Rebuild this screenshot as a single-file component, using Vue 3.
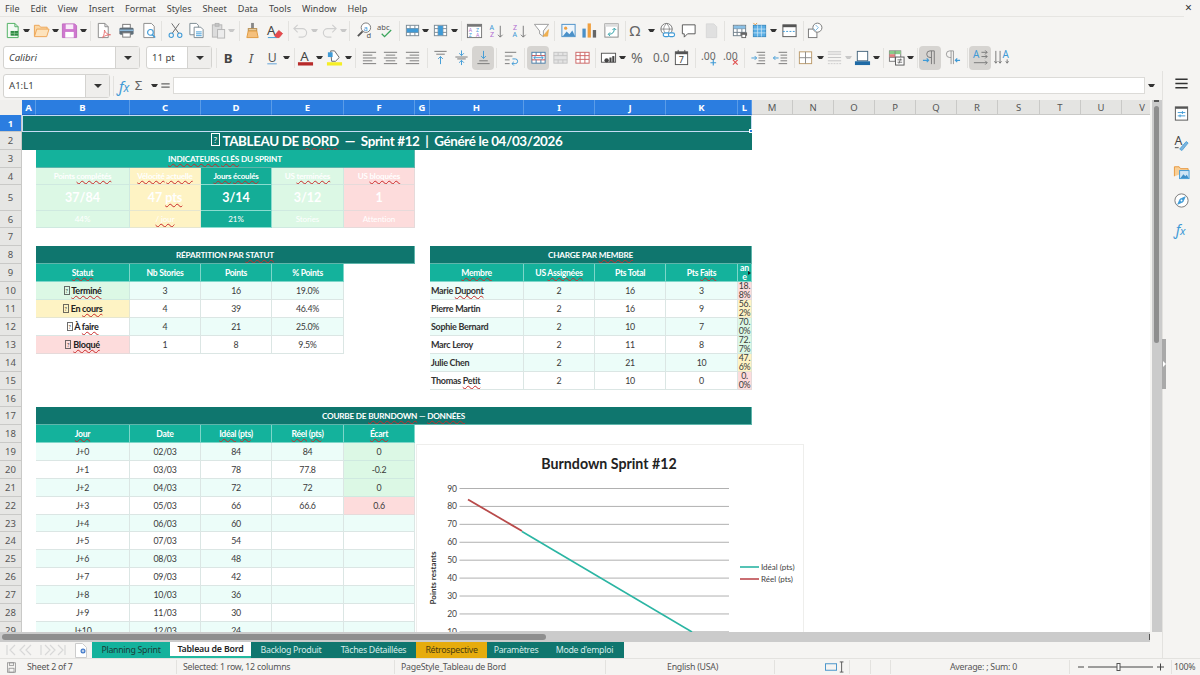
<script setup>
const DK = '#555'
const BL = '#3f9ad6'
const S = (d, c = DK, w = 1, f = 'none') => `<path d="${d}" stroke="${c}" stroke-width="${w}" fill="${f}"/>`
const R = (x, y, w, h, f, s = 'none') => `<rect x="${x}" y="${y}" width="${w}" height="${h}" fill="${f}" stroke="${s}"/>`
const O = (x, y, r, f, s = 'none', w = 1) => `<circle cx="${x}" cy="${y}" r="${r}" fill="${f}" stroke="${s}" stroke-width="${w}"/>`
const T = (x, y, t, z, c = DK, ex = '') => `<text x="${x}" y="${y}" font-size="${z}" fill="${c}" font-family="Noto Sans, sans-serif" ${ex}>${t}</text>`
const GRID = (c = '#8a8a8a') => R(2.5, 3.5, 13, 11, '#fff', c) + S('M2.5 7h13M2.5 11h13M6.5 3.5v11M11.5 3.5v11', c)
const arrowD = (x, y1, y2, c = BL) => S(`M${x} ${y1}V${y2}M${x - 2.5} ${y2 - 2.5}L${x} ${y2}l2.5 -2.5`, c)
const arrowU = (x, y1, y2, c = BL) => S(`M${x} ${y1}V${y2}M${x - 2.5} ${y2 + 2.5}L${x} ${y2}l2.5 2.5`, c)

const icons = {
  new: S('M3.5 1.5h8l3.5 3.5v11.5H3.5z', '#4caf60', 1, '#f3faf4') + S('M11.5 1.5V5H15', '#4caf60') + R(7, 9.5, 8, 5, '#2e8b44') + S('M7 12h8M11 9.5v5', '#a5d6a7', .6),
  open: S('M1.5 15V3.5h5l1.5 2h7V8', '#eda555', 1, '#fbd8a6') + S('M1.5 15.5l2.5-8h13l-2.5 8z', '#eda555', 1, '#fde3bd'),
  save: S('M1.5 2h13l2 2v12.5h-15z', '#c06ac0', 1, '#cf78cf') + R(5, 2.5, 8, 5, '#f9ecf9') + R(4.5, 10.5, 9, 6, '#fff'),
  pdf: S('M3.5 1.5h7l3.5 3.5v11.5H3.5z', '#888', 1, '#fff') + S('M10.5 1.5V5H14', '#888') + S('M8 16.5c2-3 2-6 2-8 1 3 3 5 6.5 5-3.5 0-6.5 1-8.5 3z', '#e87070'),
  print: R(5, 2.5, 8, 4, '#fff', '#777') + `<rect x="1.5" y="6" width="15" height="7.5" rx="1.5" fill="#5f6d77"/>` + R(1.5, 8, 15, 1.6, '#8cb8d8') + R(5, 11.5, 8, 4.5, '#fff', '#777'),
  preview: S('M3 1.5h8l3 3v12H3z', '#888', 1, '#fff') + O(10, 11, 3, '#fff', BL, 1.2) + S('M12 13.5l3 3', BL, 1.5),
  cut: S('M5 1.5l7.5 10.5M13 1.5L5.5 12', '#666', 1) + O(4.5, 14, 2.3, 'none', BL, 1.1) + O(13.5, 14, 2.3, 'none', BL, 1.1),
  copy: S('M2 1.5h7l2 2v10H2z', '#7a8890', 1, '#fff') + S('M6.5 5.5h7l2.5 2.5v8.5H6.5z', '#7a8890', 1, '#fff') + S('M8.500 10.5h6M8.5 12.5h6M8.5 14.5h6', BL),
  paste: R(2.5, 3, 10, 13, '#dcdcdc', '#b5b5b5') + R(5.5, 1.5, 4, 3, '#c4c4c4', '#b5b5b5') + R(8, 8, 7.5, 9, '#ececec', '#b5b5b5'),
  clone: R(7.5, 1, 3, 6, '#888') + R(4.5, 7, 9, 2.5, '#e9d2a8', '#b58a4a') + S('M4.5 9.500h9l1.500 7H3z', '#e09a3f', 1, '#f5c07d'),
  clear: T(1, 14, 'A', 14, '#444') + S('M9 14.5l4.5-5.5 4 3.2-3.6 4.3h-3z', '#d43c3c', .8, '#e8494f') + S('M2 16.5h9', BL),
  undo: S('M6 3L2 7l4 4M2 7h9a4.4 4.4 0 0 1 0 9H7', '#cfcfcf', 1.2),
  redo: S('M12 3l4 4-4 4M16 7H7a4.4 4.4 0 0 0 0 9h4', '#cfcfcf', 1.2),
  find: O(10.5, 6, 5, '#fff', '#777') + T(8, 9, 'a', 8, BL) + S('M7 10l-5 5', '#555', 2) + T(11, 17, 'd', 8, '#555'),
  spell: T(0, 8, 'abc', 8, '#555') + S('M5 12.5l3 3 7-7', '#3ba55c', 1.4),
  row: GRID('#7a8a96') + R(3, 7, 12, 4, BL),
  col: GRID('#7a8a96') + R(6.5, 4, 5, 10, BL),
  sort: R(1.5, 2.5, 15, 14, '#fff', '#777') + R(1.5, 2.5, 15, 2.5, '#777') + T(3, 10.5, 'A', 5.5, '#b06ad0') + T(10.5, 10.5, 'Z', 5.5, BL) + T(3, 16, 'Z', 5.5, BL) + T(10.5, 16, 'A', 5.5, '#b06ad0'),
  asc: T(1.5, 8, 'A', 7.5, BL) + T(2, 16, 'Z', 7.5, '#b06ad0') + arrowD(13, 4, 16, '#777'),
  desc: T(2, 8, 'Z', 7.5, '#b06ad0') + T(1.5, 16, 'A', 7.5, BL) + arrowD(13, 4, 16, '#777'),
  filter: S('M1.5 2.5h15l-5.5 7v6l-4-3v-3z', '#999', 1, '#fff') + S('M10.5 15l6-7-1 7z', '#e8a33d', .6, '#f0b050'),
  image: R(2, 2.5, 14, 13, '#eef5fb', '#4a90c8') + O(6, 6.5, 1.7, '#f0a040') + S('M3 15l4-5 3 3 3-4 3 6z', 'none', 1, '#4a90c8'),
  chart: R(1.5, 7, 3.5, 9.5, '#4a90c8') + R(7, 1.5, 3.5, 15, '#f0a040') + R(12.5, 8.5, 3.5, 8, '#666'),
  pivot: R(2, 2, 14, 14, '#fff', '#888') + R(2, 2, 14, 3, '#ddd') + S('M6 13c4 0 6-2 6-6M10 8.5l2-2 2 2M7.5 11L5.5 13l2 2', '#2b9ea6'),
  omega: T(0.5, 14.5, 'Ω', 16, '#666'),
  link: O(8, 7.5, 6, '#fff', '#777') + S('M2 7.5h12M8 1.5c-4 4-4 8 0 12M8 1.5c4 4 4 8 0 12', '#777', .8) + `<rect x="4.5" y="11.5" width="6.5" height="4" rx="2" fill="#fff" stroke="${BL}" stroke-width="1.2"/><rect x="10" y="11.5" width="6.5" height="4" rx="2" fill="#fff" stroke="${BL}" stroke-width="1.2"/>`,
  comment: S('M2.5 3h13.5v9.5H8L4.5 16v-3.5h-2z', '#555', 1, '#fff'),
  hf: S('M3.5 2h8l3 3v11.5h-11z', '#d8d8d8', 1, '#e0e0e0'),
  area: GRID('#6e7e8a') + R(3, 4, 12, 3, '#8ac0e6') + R(10, 11, 7, 3.5, '#666') + R(11.5, 13, 4, 3.5, '#fff', '#666'),
  freeze: R(2.5, 3.5, 13, 12, '#5aaee5', '#3c8bc0') + S('M2.5 7.5h13M2.5 11.5h13M7 3.5v12M11 3.5v12', '#cfe7f6', .8) + S('M2.5 1l2 2 2-2', '#e8963c'),
  split: R(2, 3, 14, 12.5, '#fff', '#555') + R(2, 3, 14, 2.5, '#555') + S('M2 10h14', BL, 1, 'none').replace('/>', ' stroke-dasharray="2 1.5"/>'),
  shapes: R(1.5, 7.5, 9, 9, '#fff', '#777') + O(11, 6, 4.8, '#fff', '#777') + S('M9 3l3 3-3 3-2-2', '#3f9ad6', .7),
  bold: T(4, 14.5, 'B', 14, '#444', 'font-weight="700"'),
  ital: T(6, 14.5, 'I', 14, '#555', 'font-style="italic"'),
  under: T(4, 13.5, 'U', 13, '#555') + R(3.5, 15, 10, 1.3, '#7fb4de'),
  fcolor: T(3.5, 13, 'A', 14, '#444') + R(1, 14, 16, 3.5, '#b82a2a'),
  hcolor: S('M5 2h4l5 7-4 4H6z', '#666', 1, '#fff') + R(2, 3.5, 5, 5, BL) + R(1, 14, 16, 3.5, '#f5ee25'),
  al: S('M2 3.5h14M2 6.5h10M2 9.5h14M2 12.5h10M2 15.5h14', '#777'),
  ac: S('M2 3.5h14M4 6.5h10M2 9.5h14M4 12.5h10M2 15.5h14', '#777'),
  ar: S('M2 3.5h14M6 6.5h10M2 9.5h14M6 12.5h10M2 15.5h14', '#777'),
  vt: S('M2.5 2.5h13M4.5 5.5h9', '#777') + arrowU(9, 16, 8),
  vm: S('M2.5 8.5h13M4.5 10.5h9', '#777') + arrowD(9, 1.5, 7) + arrowU(9, 17, 12),
  vb: S('M4.5 12.5h9M2.5 15.5h13', '#777') + arrowD(9, 2, 10),
  wrap: S('M2 3.5h12M2 7.5h8M2 11.5h5M2 15.5h5', '#777') + S('M10 10.5h3a2.2 2.2 0 0 1 0 5H9.5M11.5 13.5l-2 2 2 2', BL),
  merge: R(2, 3.5, 14, 11.5, '#fff', '#4a7ea8') + S('M2 7h14M2 11.5h14', '#c44') + S('M6.5 3.5v3.5M11.5 3.5V7M6.5 11.5V15M11.5 11.5V15', '#4a7ea8') + S('M4 9.2h10M6 7.5l-2 1.7 2 1.7M12 7.5l2 1.7-2 1.7', BL),
  mergeC: R(2, 3.5, 14, 11.5, '#e4e4e4', '#c4c4c4') + S('M2 7h14M2 11.5h14M6.5 3.5V7M11.5 3.5V7M6.5 11.5V15M11.5 11.5V15', '#c4c4c4'),
  unmerge: R(2, 3.5, 14, 11.5, '#fff', '#c66') + S('M2 7h14M2 11h14M6.5 3.5V15M11.5 3.5V15', '#c66'),
  curr: R(1.5, 4.5, 15, 9.5, '#fff', '#555') + O(7, 12, 2.3, '#444') + R(10, 9, 2.2, 5, '#444') + R(13, 7.5, 2.2, 6.5, '#444'),
  pct: T(1, 14.5, '%', 15, '#666'),
  num: T(1, 14, '0.0', 12.5, '#666'),
  date: R(2.5, 3, 13, 13.5, '#fff', '#555') + R(2.5, 3, 13, 2.5, '#555') + S('M5.5 1v3M12.5 1v3', '#555') + T(6, 14.5, '7', 9.5, '#444'),
  dplus: T(0, 12, '.00', 11, '#666') + S('M13 11.5v6M10 14.5h6', BL, 1.2),
  dminus: T(0, 12, '.00', 11, '#666') + S('M10.5 11.5l5 5M15.5 11.5l-5 5', '#e05050', 1.2),
  iin: S('M7 3.5h9M9 6.5h7M9 9.5h7M9 12.5h7M7 15.5h9', '#777') + S('M1.5 9.5h5.5M5 7.5l2 2-2 2', BL),
  iout: S('M7 3.5h9M9 6.5h7M9 9.5h7M9 12.5h7M7 15.5h9', '#777') + S('M7 9.5H1.5M3.5 7.5l-2 2 2 2', BL),
  border: R(2.5, 3, 13, 12.5, '#fff', '#bb9a6a') + S('M2.5 9.2h13M9 3v12.5', '#888'),
  lstyle: S('M2 3h14M2 5.5h14M2 9h14M2 12.5h14', '#c4c4c4', 1) + S('M2 15.5h14', '#ccc', 1).replace('/>', ' stroke-dasharray="2 1"/>'),
  bcolor: R(3.5, 2.5, 11, 10, '#fff', '#45657e') + R(1, 13, 16, 4, '#1f6aa5'),
  cond: R(1.5, 2, 12, 11, '#fff', '#777') + R(1.5, 2, 12, 3.5, '#8acb8a') + R(1.5, 5.5, 6, 3.5, '#e28080') + S('M1.5 9h12M7.5 2v11', '#777', .7) + R(8, 8.5, 9, 8.5, '#fff', '#555') + S('M10 11.5h5M10 14h5M13.5 10l-2 5.5', '#555', .8),
  ltr: S('M13 2H8.5a3.5 3.5 0 0 0 0 7H10M10 2v14M13 2v14', '#777') + S('M1 12h6M5 10l2 2-2 2', BL, 1.2),
  rtl: S('M10 2H6a3 3 0 0 0 0 7h1.5M7.5 2v14M10 2v14', '#999') + S('M17 12h-5M14 10l-2 2 2 2', BL, 1.2),
  atxt: T(1, 9.5, 'A', 10.5, BL) + S('M10 3.5h6M14 1.5l2 2-2 2M10 8h6M14 6l2 2-2 2M2 14.5h14M14 12.5l2 2-2 2', '#777'),
  vtxt: S('M3 2v13M1.5 13l1.5 2 1.5-2M7.5 2v13M6 13l1.5 2 1.5-2M15 11v4M13.5 13l1.5 2 1.5-2', '#777') + T(10, 10, 'A', 10.5, BL),
  menu: S('M2.5 4.5h13M2.5 9h13M2.5 13.5h13', '#333', 1.6),
  prop: R(2.5, 2, 13, 14, '#fff', '#555') + R(2.5, 2, 13, 2, '#555') + S('M5 8h8M5 11.5h8', BL) + S('M10 6.5v3M7.5 10v3', BL),
  styl: T(1.5, 11.5, 'A', 13, '#444') + S('M7 16l7-8 2 1.5-6.5 8z', BL, .8, '#7fb4de') + S('M2 14.5h4', '#444'),
  gall: S('M1.5 14V4h5l1.5 2h8v3', '#e8963c', 1, '#f9cf96') + R(7, 8, 10, 8.5, '#cfe4f4', BL) + S('M8 16l3-4 2 2 1.5-1.5 2 3.5z', 'none', 1, '#3f8fc8'),
  nav: O(9, 9, 7, '#fff', '#777') + S('M13 5L7.5 7.5 5 13l5.5-2.5z', BL, .8, BL) + O(9, 9, 1, '#fff'),
  fx: T(1.5, 14.5, 'ƒ', 15, BL, 'font-style="italic" font-family="Liberation Serif, serif"') + T(7.5, 15, 'x', 12, BL, 'font-style="italic"'),
  docs: R(3.5, 2.5, 11, 13, 'none', '#888') + R(6, 2.5, 6, 3.5, 'none', '#888') + R(5.5, 10, 7, 5.5, 'none', '#888'),
  sigma: T(3, 14, 'Σ', 15, '#666'),
  eq: S('M4 7h10M4 11h10', '#666', 1.6)
}

const layout = (items, start) => {
  let end = start
  return items.map(([k, c, a]) => {
    const type = k === 'v' ? 'drop' : k === '|' ? 'sep' : 'btn'
    const w = type === 'drop' ? 8 : type === 'sep' ? 1 : 22
    const ml = c - w / 2 - end
    end = c + w / 2
    return { k, type, ml, a }
  })
}

const tb1 = layout([
  ['new', 12], ['v', 27], ['open', 42], ['v', 57], ['save', 71], ['v', 86], ['|', 93], ['pdf', 106], ['print', 129], ['preview', 152], ['|', 164],
  ['cut', 178], ['copy', 199], ['paste', 221], ['v', 235, 'off'], ['|', 243], ['clone', 256], ['clear', 278], ['|', 292], ['undo', 304], ['v', 319, 'off'], ['redo', 334], ['v', 349, 'off'], ['|', 355],
  ['find', 370], ['spell', 391], ['|', 405], ['row', 418], ['v', 432], ['col', 447], ['v', 462], ['|', 469], ['sort', 482], ['asc', 504], ['desc', 527], ['filter', 549], ['|', 562],
  ['image', 576], ['chart', 597], ['pivot', 619], ['|', 633], ['omega', 645], ['v', 660], ['link', 676], ['comment', 697], ['hf', 720], ['|', 733], ['area', 748], ['freeze', 768], ['v', 783], ['split', 799], ['|', 813], ['shapes', 825]
], 0)

const tb2 = layout([
  ['|', 216], ['bold', 228], ['ital', 251], ['under', 272], ['v', 287], ['|', 295], ['fcolor', 306], ['v', 321], ['hcolor', 336], ['v', 351], ['|', 358],
  ['al', 372], ['ac', 393], ['ar', 415], ['|', 430], ['vt', 443], ['vm', 464], ['vb', 486, 'on'], ['|', 499], ['wrap', 514], ['|', 527], ['merge', 541, 'on'], ['mergeC', 563], ['unmerge', 585], ['|', 598],
  ['curr', 611], ['v', 626], ['pct', 642], ['num', 664], ['date', 685], ['|', 699], ['dplus', 713], ['dminus', 735], ['|', 748], ['iin', 762], ['iout', 784], ['|', 798],
  ['border', 809], ['v', 825], ['lstyle', 839], ['v', 854, 'off'], ['bcolor', 868], ['v', 883], ['|', 890], ['cond', 903], ['v', 918], ['|', 925], ['ltr', 938, 'on'], ['rtl', 960], ['|', 975], ['atxt', 988, 'on'], ['vtxt', 1009]
], 212)

const menus = ['File', 'Edit', 'View', 'Insert', 'Format', 'Styles', 'Sheet', 'Data', 'Tools', 'Window', 'Help']
const sideIcons = ['prop', 'styl', 'gall', 'nav', 'fx']
const colNames = 'ABCDEFGHIJKLMNOPQRSTUV'.split('')
const rowNums = Array.from({ length: 29 }, (_, i) => i + 1)

const cells = []
const add = (r, col, t, cls, span = 1) => {
  const c = colNames.indexOf(col) + 2
  cells.push({ id: `${col}${r}`, area: `${r + 1} / ${c} / ${r + 2} / ${c + span}`, parts: parse(t), cls })
}
function parse (t) {
  return String(t).split(/(~[^~]+~|§)/).filter(Boolean).map(p =>
    p === '§' ? { k: 'box' } : p[0] === '~' ? { k: 'bad', t: p.slice(1, -1) } : { k: 'txt', t: p })
}

add(1, 'A', '', 'dark sel', 12)
add(2, 'A', '§ TABLEAU DE ~BORD~  —  Sprint #12  |  Généré le 04/03/2026', 'dark title', 12)
add(3, 'B', '~INDICATEURS~ ~CLÉS~ DU SPRINT', 'mid band', 5)
const kpi = [
  ['B', 'Points ~complétés~', '37/84', '44%', 'kg'],
  ['C', '~Vélocité~ ~actuelle~', '47 ~pts~', '~/ jour~', 'ky'],
  ['D', '~Jours~ ~écoulés~', '3/14', '21%', 'km'],
  ['E', 'US ~terminées~', '3/12', 'Stories', 'kg'],
  ['F', 'US ~bloquées~', '1', 'Attention', 'kr']
]
kpi.forEach(([c, a, b, d, k]) => {
  add(4, c, a, `${k} klabel`)
  add(5, c, b, `${k} kval`)
  add(6, c, d, `${k} ksub`)
})

add(8, 'B', 'RÉPARTITION PAR ~STATUT~', 'dark band', 5)
;['~Statut~', 'Nb Stories', 'Points', '% Points'].forEach((t, i) => add(9, 'BCDE'[i], t, 'mid head'))
;[
  ['§ ~Terminé~', 'sg', 3, 16, '19.0%'],
  ['§ En ~cours~', 'sy', 4, 39, '46.4%'],
  ['§ À ~faire~', 'sw', 4, 21, '25.0%'],
  ['§ ~Bloqué~', 'sr', 1, 8, '9.5%']
].forEach((row, i) => {
  const alt = i % 2 === 0 ? 'alt' : 'plain'
  add(10 + i, 'B', row[0], `${row[1]} stcell`)
  add(10 + i, 'C', row[2], alt)
  add(10 + i, 'D', row[3], alt)
  add(10 + i, 'E', row[4], alt)
})

add(8, 'H', 'CHARGE PAR ~MEMBRE~', 'dark band', 5)
;['~Membre~', 'US ~Assignées~', 'Pts Total', 'Pts ~Faits~'].forEach((t, i) => add(9, 'HIJK'[i], t, 'mid head'))
add(9, 'L', 'ane', 'mid narrow clipped')
;[
  ['Marie ~Dupont~', 2, 16, 3, '18.8%', 'sr'],
  ['Pierre Martin', 2, 16, 9, '56.2%', 'sy'],
  ['Sophie Bernard', 2, 10, 7, '70.0%', 'sg'],
  ['Marc Leroy', 2, 11, 8, '72.7%', 'sg'],
  ['Julie Chen', 2, 21, 10, '47.6%', 'sy'],
  ['Thomas ~Petit~', 2, 10, 0, '0.0%', 'sr']
].forEach((row, i) => {
  const alt = i % 2 === 0 ? 'alt' : 'plain'
  add(10 + i, 'H', row[0], `${alt} name`)
  add(10 + i, 'I', row[1], alt)
  add(10 + i, 'J', row[2], alt)
  add(10 + i, 'K', row[3], alt)
  add(10 + i, 'L', row[4], `${row[5]} narrow`)
})

add(17, 'B', 'COURBE DE ~BURNDOWN~ — ~DONNÉES~', 'dark band', 11)
;['~Jour~', 'Date', '~Idéal~ (~pts~)', '~Réel~ (~pts~)', '~Écart~'].forEach((t, i) => add(18, 'BCDEF'[i], t, 'mid head'))
const burn = [
  ['J+0', '02/03', 84, 84, 0], ['J+1', '03/03', 78, 77.8, -0.2], ['J+2', '04/03', 72, 72, 0], ['J+3', '05/03', 66, 66.6, 0.6],
  ['J+4', '06/03', 60], ['J+5', '07/03', 54], ['J+6', '08/03', 48], ['J+7', '09/03', 42], ['J+8', '10/03', 36], ['J+9', '11/03', 30], ['J+10', '12/03', 24]
]
burn.forEach((row, i) => {
  const alt = i % 2 === 0 ? 'alt' : 'plain'
  const r = 19 + i
  add(r, 'B', row[0], alt)
  add(r, 'C', row[1], alt)
  add(r, 'D', row[2], alt)
  add(r, 'E', row[3] ?? '', alt)
  const e = row[4]
  add(r, 'F', e ?? '', e === undefined ? alt : e > 0 ? 'sr' : 'sg')
})

const ticks = [90, 80, 70, 60, 50, 40, 30, 20, 10]
const yAt = v => 44.5 + (90 - v) * 1.792
const tabs = [
  { t: 'Planning Sprint', w: 78, c: 'tmid' },
  { t: 'Tableau de Bord', w: 81, c: 'tact' },
  { t: 'Backlog Produit', w: 80, c: 'tdark' },
  { t: 'Tâches Détaillées', w: 85, c: 'tdark' },
  { t: 'Rétrospective', w: 71, c: 'tgold' },
  { t: 'Paramètres', w: 58, c: 'tdark' },
  { t: "Mode d'emploi", w: 79, c: 'tdark' }
]
</script>

<template>
  <div class="app">
    <div class="menubar">
      <span v-for="m in menus" :key="m" class="menu">{{ m }}</span>
      <span class="close">×</span>
    </div>

    <div class="toolbar">
      <template v-for="(it, i) in tb1" :key="i">
        <span v-if="it.type === 'sep'" class="sep" :style="{ marginLeft: it.ml + 'px' }"></span>
        <span v-else-if="it.type === 'drop'" class="drop" :class="it.a" :style="{ marginLeft: it.ml + 'px' }"></span>
        <span v-else class="btn" :style="{ marginLeft: it.ml + 'px' }"><svg class="ic" viewBox="0 0 18 18" v-html="icons[it.k]"></svg></span>
      </template>
    </div>

    <div class="toolbar">
      <div class="combo fontname"><span class="combotext italic">Calibri</span><span class="combobtn"><i class="caret"></i></span></div>
      <div class="combo fontsize"><span class="combotext">11 pt</span><span class="combobtn"><i class="caret"></i></span></div>
      <template v-for="(it, i) in tb2" :key="i">
        <span v-if="it.type === 'sep'" class="sep" :style="{ marginLeft: it.ml + 'px' }"></span>
        <span v-else-if="it.type === 'drop'" class="drop" :class="it.a" :style="{ marginLeft: it.ml + 'px' }"></span>
        <span v-else class="btn" :class="it.a" :style="{ marginLeft: it.ml + 'px' }"><svg class="ic" viewBox="0 0 18 18" v-html="icons[it.k]"></svg></span>
      </template>
    </div>

    <div class="main">
      <div class="work">
        <div class="formula">
          <div class="combo namebox"><span class="combotext">A1:L1</span><span class="combobtn"><i class="caret"></i></span></div>
          <span class="sep fsep"></span>
          <svg class="ic fxi" viewBox="0 0 18 18" v-html="icons.fx"></svg>
          <svg class="ic sumi" viewBox="0 0 18 18" v-html="icons.sigma"></svg>
          <span class="drop sumd"></span>
          <svg class="ic eqi" viewBox="0 0 18 18" v-html="icons.eq"></svg>
          <div class="finput"></div>
          <span class="drop fdrop"></span>
        </div>

        <div class="sheetarea">
          <div class="sheet">
            <div class="grid">
              <div class="corner"></div>
              <div v-for="(c, i) in colNames" :key="c" class="colh" :class="{ on: i < 12 }">{{ c }}</div>
              <div v-for="r in rowNums" :key="r" class="rowh" :class="{ on: r === 1 }" :style="{ gridRow: r + 1 }">{{ r }}</div>
              <div v-for="c in cells" :key="c.id" class="cell" :class="c.cls" :style="{ gridArea: c.area }">
                <span class="inner"><template v-for="(p, i) in c.parts" :key="i"><span v-if="p.k === 'box'" class="tofu">?</span><span v-else-if="p.k === 'bad'" class="bad">{{ p.t }}</span><template v-else>{{ p.t }}</template></template></span>
              </div>
            </div>

            <div class="chart">
              <svg width="388" height="190" viewBox="0 0 388 190">
                <text x="193" y="25" class="ctitle" text-anchor="middle">Burndown Sprint #12</text>
                <g v-for="v in ticks" :key="v">
                  <line x1="43.5" x2="313" :y1="yAt(v)" :y2="yAt(v)" stroke="#b0b0b0" stroke-width="1" />
                  <text x="41" :y="yAt(v) + 3" class="ctick" text-anchor="end">{{ v }}</text>
                </g>
                <text class="caxis" text-anchor="middle" transform="translate(20 134) rotate(-90)">Points restants</text>
                <line x1="106" :y1="yAt(66)" x2="276" y2="188" stroke="#2bb5a3" stroke-width="1.6" />
                <polyline points="52,55.5 70,66 88,76.5 106,87" fill="none" stroke="#b84a4a" stroke-width="1.8" />
                <line x1="324" x2="343" y1="123" y2="123" stroke="#2bb5a3" stroke-width="1.6" />
                <line x1="324" x2="343" y1="135" y2="135" stroke="#bd4a4f" stroke-width="1.6" />
                <text x="345" y="126" class="clegend">Idéal (pts)</text>
                <text x="345" y="138" class="clegend">Réel (pts)</text>
              </svg>
            </div>
          </div>
          <div class="vscroll"><i class="vcap"></i><i class="vthumb"></i></div>
        </div>

        <div class="hscroll"><i class="hthumb"></i><i class="hmark"></i></div>

        <div class="tabbar">
          <div class="tabnav">
            <svg width="62" height="16" viewBox="0 0 62 16">
              <path d="M2 3v10M10 3L5 8l5 5M20 3l-5 5 5 5M26 3l-5 5 5 5M36 3v10M40 3l5 5-5 5M45 3l5 5-5 5M53 3l5 5-5 5M60 3v10" fill="none" stroke="#d8d8d8" stroke-width="1.2" />
            </svg>
          </div>
          <div class="newtab">
            <svg width="12" height="15" viewBox="0 0 12 15">
              <path d="M.5 .5h7l4 4v10H.5z" fill="#fff" stroke="#ccc" />
              <circle cx="8" cy="8" r="2.5" fill="#3f78c9" />
              <path d="M6.7 8h2.6M8 6.7v2.6" stroke="#fff" stroke-width=".8" />
            </svg>
          </div>
          <div v-for="t in tabs" :key="t.t" class="tab" :class="t.c" :style="{ width: t.w + 'px' }">{{ t.t }}</div>
        </div>
      </div>

      <div class="sidebar">
        <svg class="ic sidemenu" viewBox="0 0 18 18" v-html="icons.menu"></svg>
        <svg v-for="s in sideIcons" :key="s" class="ic" viewBox="0 0 18 18" v-html="icons[s]"></svg>
        <div class="sash"></div>
      </div>
    </div>

    <div class="statusbar">
      <svg class="ic sdoc" viewBox="0 0 18 18" v-html="icons.docs"></svg>
      <span class="st s1">Sheet 2 of 7</span>
      <span class="st s2">Selected: 1 row, 12 columns</span>
      <span class="st s3">PageStyle_Tableau de Bord</span>
      <span class="st s4">English (USA)</span>
      <span class="st s5">
        <svg width="26" height="14" viewBox="0 0 26 14">
          <rect x=".5" y="3.5" width="12" height="7" fill="none" stroke="#3f8fc8" />
          <path d="M16 1.5h4M18 1.5v11M16 12.5h4" stroke="#555" fill="none" />
        </svg>
      </span>
      <span class="st s6"></span>
      <span class="st s7"></span>
      <span class="st s8">Average: ; Sum: 0</span>
      <span class="st s9">
        <svg width="100" height="14" viewBox="0 0 100 14">
          <path d="M8 7h6M18 7h65M87 7h7M90.500 3.500v7" stroke="#444" fill="none" />
          <rect x="47" y="3.500" width="3" height="7" fill="#fff" stroke="#555" />
        </svg>
      </span>
      <span class="st s10">100%</span>
    </div>
  </div>
</template>

<style scoped>
.app {
  width: 1200px;
  height: 675px;
  overflow: hidden;
  display: flex;
  flex-direction: column;
  background: #f5f4f2;
  font-family: "Noto Sans", sans-serif;
  color: #444;
}
.menubar {
  height: 17px;
  flex: none;
  display: flex;
  align-items: center;
  gap: 11px;
  padding-left: 5px;
  font-size: 9.1px;
  position: relative;
  box-sizing: border-box;
  border-bottom: 1px solid #e6e5e2;
  margin-right: 16px;
}
.close { position: absolute; left: 1185px; top: 1px; font-size: 12px; line-height: 14px; color: #333; }
.toolbar {
  height: 27px;
  flex: none;
  display: flex;
  align-items: center;
}
.btn {
  width: 22px;
  height: 24px;
  flex: none;
  display: flex;
  align-items: center;
  justify-content: center;
  border-radius: 4px;
}
.btn.on { background: #d6d4d1; }
.ic { width: 17px; height: 17px; flex: none; display: block; overflow: visible; }
.drop {
  flex: none;
  box-sizing: content-box;
  border-left: 2.5px solid transparent;
  border-right: 2.5px solid transparent;
  border-top: 3px solid #333;
  width: 3px;
  height: 0;
}
.drop.off { border-top-color: #c8c8c8; }
.sep { width: 1px; height: 20px; flex: none; background: #e3e2df; }
.combo {
  display: flex;
  box-sizing: border-box;
  border: 1px solid #d4d3d0;
  border-radius: 3px;
  background: #fff;
  flex: none;
  height: 23px;
  font-size: 9.6px;
  color: #444;
}
.combotext { flex: 1; display: flex; align-items: center; padding-left: 5px; }
.italic { font-style: italic; }
.combobtn {
  width: 23px;
  flex: none;
  display: flex;
  align-items: center;
  justify-content: center;
  background: #efeeec;
  border-left: 1px solid #d4d3d0;
}
.caret {
  width: 0;
  height: 0;
  border-left: 4px solid transparent;
  border-right: 4px solid transparent;
  border-top: 4px solid #333;
}
.fontname { width: 137px; margin-left: 3px; }
.fontsize { width: 66px; margin-left: 6px; }
.main { flex: 1; display: flex; min-height: 0; }
.work { width: 1162px; flex: none; display: flex; flex-direction: column; border-right: 1px solid #e3e2df; }
.formula { height: 29px; flex: none; display: flex; align-items: center; }
.namebox { width: 107px; height: 24px; margin-left: 3px; }
.fsep { margin-left: 3px; }
.fxi { margin-left: 2px; width: 18px; height: 18px; }
.sumi { width: 16px; height: 17px; margin-left: -2px; }
.sumd { margin-left: 3px; }
.eqi { margin-left: 0; width: 15px; height: 15px; }
.finput { width: 972px; height: 17px; margin-left: 0; background: #fff; border: 1px solid #dcdbd8; box-sizing: border-box; flex: none; }
.fdrop { margin-left: 3px; }
.sheetarea { flex: 1; display: flex; min-height: 0; }
.sheet { width: 1150px; flex: none; position: relative; overflow: hidden; background: #fff; }
.grid {
  display: grid;
  grid-template-columns: 22px 14px 94px 71px 71px 72px 71px 15px 94px 71px 71px 72px 14px 41px 41px 41px 41px 41px 41px 42px 41px 41px 41px;
  grid-template-rows: 15px 17px 18px 18px 17px 26px 17px 18px 18px 18px 18px 18px 18px 18px 18px 18px 17px 18px 18px 18px 18px 18px 18px 17px 18px 18px 18px 18px 18px 18px;
}
.corner { background: #f0efed; grid-row: 1; grid-column: 1; }
.colh {
  background: #e4e4e2;
  color: #555;
  font-size: 9.5px;
  display: flex;
  align-items: center;
  justify-content: center;
  box-sizing: border-box;
  border-right: 1px solid #c9c9c7;
  border-bottom: 1px solid #c9c9c7;
  grid-row: 1;
}
.colh.on { background: #2b7de0; color: #fff; font-weight: 700; border-right-color: #5a9ce8; border-bottom-color: #1f6ac4; }
.rowh {
  grid-column: 1;
  background: #e6e6e4;
  color: #555;
  font-size: 9.5px;
  display: flex;
  align-items: center;
  justify-content: center;
  box-sizing: border-box;
  border-right: 1px solid #c9c9c7;
  border-bottom: 1px solid #c9c9c7;
  overflow: hidden;
}
.rowh.on { background: #2b7de0; color: #fff; font-weight: 700; }
.cell {
  font-family: Lato, sans-serif;
  font-size: 8.8px;
  letter-spacing: -.25px;
  display: flex;
  align-items: center;
  justify-content: center;
  box-sizing: border-box;
  border-right: 1px solid #dbe6e4;
  border-bottom: 1px solid #dbe6e4;
  overflow: hidden;
  color: #3a3a3a;
  min-width: 0;
  white-space: pre;
}
.inner { display: block; }
.bad { text-decoration: underline wavy #c92a2a; text-decoration-thickness: 1px; text-underline-offset: 1px; text-decoration-skip-ink: none; }
.tofu {
  display: inline-block;
  box-sizing: border-box;
  width: 1.15em;
  height: 1.6em;
  border: .5px solid rgba(60, 60, 60, .75);
  font-size: .6em;
  line-height: 1.5em;
  text-align: center;
  overflow: hidden;
  font-weight: 400;
  letter-spacing: 0;
  vertical-align: -0.1em;
}
.title .tofu { border-color: #fff; }
.dark { background: #0f766e; color: #fff; border-color: #0f766e; }
.mid { background: #14b29c; color: #fff; border-color: #7dd6c9; }
.band { font-weight: 700; font-size: 8.2px; letter-spacing: -.2px; border-color: #5fb5ab; }
.title { font-size: 13.4px; letter-spacing: -.35px; font-weight: 700; overflow: visible; }
.sel { outline: 1px solid #c5dcf5; outline-offset: -1px; position: relative; overflow: visible; }
.sel::after {
  content: "";
  position: absolute;
  right: -2px;
  bottom: -2px;
  width: 4px;
  height: 4px;
  background: #2b7de0;
  border: 1px solid #fff;
  box-sizing: border-box;
}
.head { font-weight: 700; font-size: 8.6px; letter-spacing: -.3px; }
.alt { background: #ecfdf9; }
.plain { background: #fff; }
.sg, .kg { background: #dcf8e5; border-color: #cfe9e0; }
.sy, .ky { background: #fef3c4; border-color: #e6e6d0; }
.sr, .kr { background: #fddcdc; border-color: #e6dada; }
.sw { background: #fff; }
.km { background: #14ad97; color: #fff; border-color: #8adccf; }
.kg, .ky, .kr { color: #fff; }
.klabel { font-size: 8px; letter-spacing: -.2px; font-weight: 700; }
.kval { font-size: 12.5px; letter-spacing: 0; font-weight: 700; }
.ksub { font-size: 8px; letter-spacing: -.1px; }
.stcell { font-weight: 700; font-size: 9px; letter-spacing: -.3px; color: #222; }
.name { justify-content: flex-start; font-weight: 700; font-size: 9px; letter-spacing: -.3px; color: #333; padding-left: 1px; }
.narrow {
  white-space: normal;
  word-break: break-all;
  line-height: 8.6px;
  font-size: 8.8px;
  letter-spacing: -.25px;
  padding: 0;
  text-align: center;
}
.clipped { position: relative; font-weight: 700; }
.clipped::after {
  content: "";
  position: absolute;
  right: 0;
  top: 7px;
  border-left: 3px solid #222;
  border-top: 2px solid transparent;
  border-bottom: 2px solid transparent;
}
.chart {
  position: absolute;
  left: 416px;
  top: 344px;
  width: 388px;
  height: 300px;
  box-sizing: border-box;
  border: 1px solid #eeeeec;
  background: #fff;
}
.chart svg { display: block; margin: -1px; }
.ctitle { font: 700 14.2px Lato, sans-serif; fill: #222; }
.ctick { font: 8.5px Lato, sans-serif; fill: #444; }
.caxis { font: 700 8px Lato, sans-serif; fill: #333; }
.clegend { font: 8px Lato, sans-serif; fill: #444; }
.vscroll { flex: 1; margin-left: 2px; background: #cbcbcb; position: relative; }
.vcap { position: absolute; left: 2px; top: 0; width: 5px; height: 2px; background: #555; }
.vthumb { position: absolute; left: 2px; top: 6px; width: 5px; height: 237px; background: #8e8e8e; border-radius: 3px; }
.hscroll { height: 10px; flex: none; width: 1150px; background: #cbcbcb; position: relative; }
.hthumb { position: absolute; left: 2px; top: 2px; width: 544px; height: 6px; background: #8e8e8e; border-radius: 3px; }
.hmark { position: absolute; right: 0; top: 2px; width: 1px; height: 6px; background: #555; }
.tabbar { height: 16px; flex: none; display: flex; align-items: stretch; }
.tabnav { width: 71px; padding-left: 5px; box-sizing: border-box; display: flex; align-items: center; }
.newtab { width: 21px; display: flex; align-items: center; padding-left: 4px; box-sizing: border-box; }
.tab {
  flex: none;
  display: flex;
  align-items: center;
  justify-content: center;
  font-size: 8.8px;
  letter-spacing: -.3px;
  box-sizing: border-box;
  white-space: nowrap;
}
.tmid { background: #14b29c; color: #1c3b37; }
.tact { background: #fff; color: #222; font-weight: 600; font-size: 8.8px; letter-spacing: -.2px; border-bottom: 2px solid #23b89f; }
.tdark { background: #0f766e; color: #d5ebe8; }
.tgold { background: #e6ac0e; color: #4a3c10; }
.sidebar { flex: 1; display: flex; flex-direction: column; align-items: center; gap: 12px; padding-top: 4px; position: relative; }
.sidemenu { margin-bottom: 1px; }
.sash {
  position: absolute;
  left: -1px;
  top: 268px;
  width: 4px;
  height: 50px;
  background: #a9a9a9;
}
.sash::after {
  content: "";
  position: absolute;
  left: 1px;
  top: 22px;
  border-left: 3px solid #fff;
  border-top: 3px solid transparent;
  border-bottom: 3px solid transparent;
}
.statusbar {
  height: 17px;
  flex: none;
  display: flex;
  align-items: center;
  border-top: 1px solid #e3e2df;
  box-sizing: border-box;
  font-size: 8.8px;
  letter-spacing: -.25px;
  color: #555;
}
.sdoc { width: 13px; height: 13px; margin-left: 5px; margin-right: 3px; }
.st { height: 14px; display: flex; align-items: center; box-sizing: border-box; border-right: 1px solid #e3e2df; flex: none; overflow: hidden; white-space: nowrap; }
.s1 { width: 156px; padding-left: 6px; }
.s2 { width: 218px; padding-left: 6px; }
.s3 { width: 211px; padding-left: 6px; }
.s4 { width: 169px; padding-left: 61px; }
.s5 { width: 75px; padding-left: 50px; }
.s6 { width: 21px; }
.s7 { width: 20px; }
.s8 { width: 179px; padding-left: 59px; }
.s9 { width: 102px; }
.s10 { flex: 1; border-right: none; padding-left: 2px; }
</style>
